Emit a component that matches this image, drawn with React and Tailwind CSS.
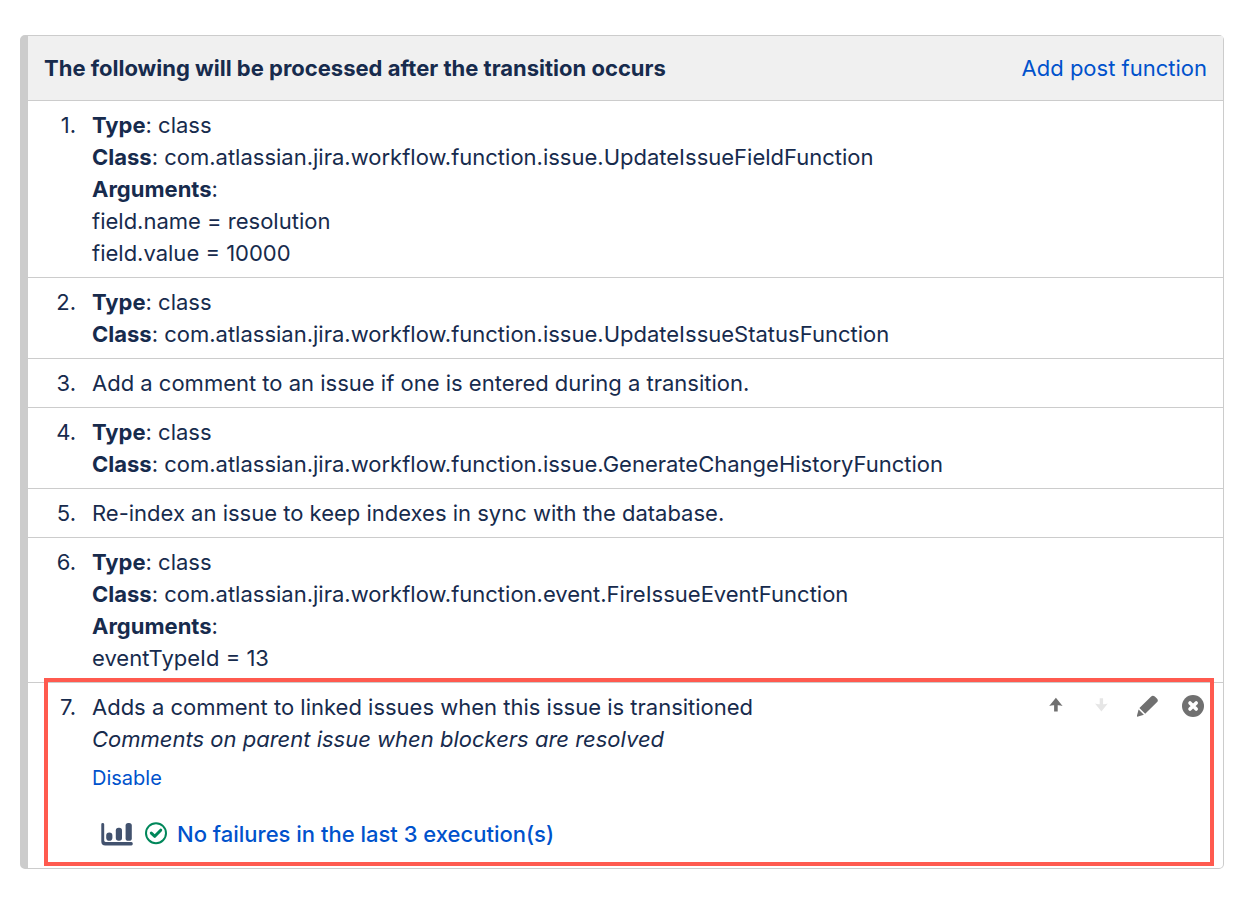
const ITEMS = [
  {
    type: "class",
    className: "com.atlassian.jira.workflow.function.issue.UpdateIssueFieldFunction",
    args: ["field.name = resolution", "field.value = 10000"],
  },
  {
    type: "class",
    className: "com.atlassian.jira.workflow.function.issue.UpdateIssueStatusFunction",
  },
  { text: "Add a comment to an issue if one is entered during a transition." },
  {
    type: "class",
    className: "com.atlassian.jira.workflow.function.issue.GenerateChangeHistoryFunction",
  },
  { text: "Re-index an issue to keep indexes in sync with the database." },
  {
    type: "class",
    className: "com.atlassian.jira.workflow.function.event.FireIssueEventFunction",
    args: ["eventTypeId = 13"],
  },
];

function ArrowIcon({ down }) {
  return (
    <svg viewBox="0 0 22 22" className="size-[22px]" fill="currentColor" aria-hidden="true">
      {down ? (
        <path d="M9.7 3.2H13.1V9.2Q15.2 9.4 17.8 8.6L11.4 16.6 5 8.6Q7.6 9.4 9.7 9.2Z" />
      ) : (
        <path d="M11.9 2.8 18.6 10.9Q15.8 10 13.7 10.2V16.4H10.1V10.2Q8 10 5.2 10.9Z" />
      )}
    </svg>
  );
}

function PencilIcon() {
  return (
    <svg viewBox="0 0 22 22" className="size-[22px]" fill="currentColor" aria-hidden="true">
      <path d="M3.4 13.1 14.9 1.7Q16.9-.2 18.8 1.6L20.9 3.5Q22.8 5.5 20.9 7.3L9.2 18.8Z" />
      <path d="M2.6 14.5 7.9 19.8 2.1 21.6Q.6 22 1 20.4Z" />
    </svg>
  );
}

function RemoveIcon() {
  return (
    <svg viewBox="0 0 22 22" className="size-[22px]" fill="none" aria-hidden="true">
      <circle cx="11" cy="11" r="11" fill="currentColor" />
      <path d="M8 7.9 14.2 14.1M14.2 7.9 8 14.1" stroke="white" strokeWidth="3.6" strokeLinecap="round" />
    </svg>
  );
}

function ChartIcon() {
  return (
    <svg viewBox="0 0 32 24" className="h-6 w-8" aria-hidden="true">
      <path d="M.3 2.2Q.3 1 1.7 1T3.2 2.2V18.6Q3.2 20 4.6 20H30.4Q31.8 20 31.8 21.7T30.4 23.4H4.3Q.3 23.4 .3 19.4Z" fill="#42526e" />
      <rect x="5.2" y="10.6" width="6.2" height="8.2" rx="3.1" fill="#42526e" />
      <rect x="14.8" y="5.8" width="6.2" height="13" rx="2.8" fill="#42526e" />
      <rect x="24.6" y="1" width="6.2" height="17.8" rx="2.6" fill="#42526e" />
    </svg>
  );
}

function CheckIcon() {
  return (
    <svg viewBox="0 0 22 24" className="h-6 w-[22px]" fill="none" stroke="#00875a" aria-hidden="true">
      <circle cx="11" cy="11.2" r="10" strokeWidth="2" />
      <path d="M6.3 11.1 9.8 14.3 15.7 8.2" strokeWidth="3" strokeLinecap="round" strokeLinejoin="round" />
    </svg>
  );
}

// One numbered entry of the list
function Row({ number, children }) {
  return (
    <li className="flex gap-4 border-b border-[#cccccc] py-2 pr-4">
      <span className="w-12 shrink-0 text-right">{number}.</span>
      <div className="min-w-0 flex-1">{children}</div>
    </li>
  );
}

export default function App() {
  return (
    <main className="pt-[35px] pr-[34px] pb-7 pl-5 font-['Inter',sans-serif] text-[22px] leading-8 text-[#172b4d]">
      <section className="rounded-[5px] border border-l-8 border-[#cccccc]">
        <header className="flex items-center justify-between gap-4 border-b border-[#cccccc] bg-[#f0f0f0] px-4 py-4">
          <h2 className="font-bold">The following will be processed after the transition occurs</h2>
          <a href="#add" className="text-[#0052cc]">Add post function</a>
        </header>

        <ol>
          {ITEMS.map((item, i) => (
            <Row key={i} number={i + 1}>
              {item.text && <p>{item.text}</p>}
              {item.type && <p><b>Type</b>: {item.type}</p>}
              {item.className && <p className="break-words"><b>Class</b>: {item.className}</p>}
              {item.args && <p><b>Arguments</b>:</p>}
              {item.args?.map((arg) => <p key={arg}>{arg}</p>)}
            </Row>
          ))}

          {/* Highlighted entry with its controls */}
          <li className="relative flex gap-4 pt-2 pr-[19px] pb-[18px]">
            <span className="w-12 shrink-0 text-right">7.</span>
            <div className="min-w-0 flex-1">
              <p>Adds a comment to linked issues when this issue is transitioned</p>
              <p className="italic">Comments on parent issue when blockers are resolved</p>
              <p className="mt-[7px]">
                <a href="#disable" className="block w-fit text-[20px] leading-8 text-[#0052cc]">Disable</a>
              </p>
              <div className="mt-6 ml-[9px] flex items-center">
                <ChartIcon />
                <span className="ml-3"><CheckIcon /></span>
                <a href="#executions" className="ml-2.5 font-medium text-[#0052cc]">
                  No failures in the last 3 execution(s)
                </a>
              </div>
            </div>
            <div className="mt-1 flex h-[22px] gap-6 text-[#707070]">
              <button type="button" aria-label="Move up"><ArrowIcon /></button>
              <button type="button" aria-label="Move down" disabled className="text-[#e6e6e6]"><ArrowIcon down /></button>
              <button type="button" aria-label="Edit"><PencilIcon /></button>
              <button type="button" aria-label="Delete"><RemoveIcon /></button>
            </div>
            <div className="pointer-events-none absolute -top-[5px] right-[9px] bottom-0.5 left-4 border-4 border-[#ff5a4f]" />
          </li>
        </ol>
      </section>
    </main>
  );
}
